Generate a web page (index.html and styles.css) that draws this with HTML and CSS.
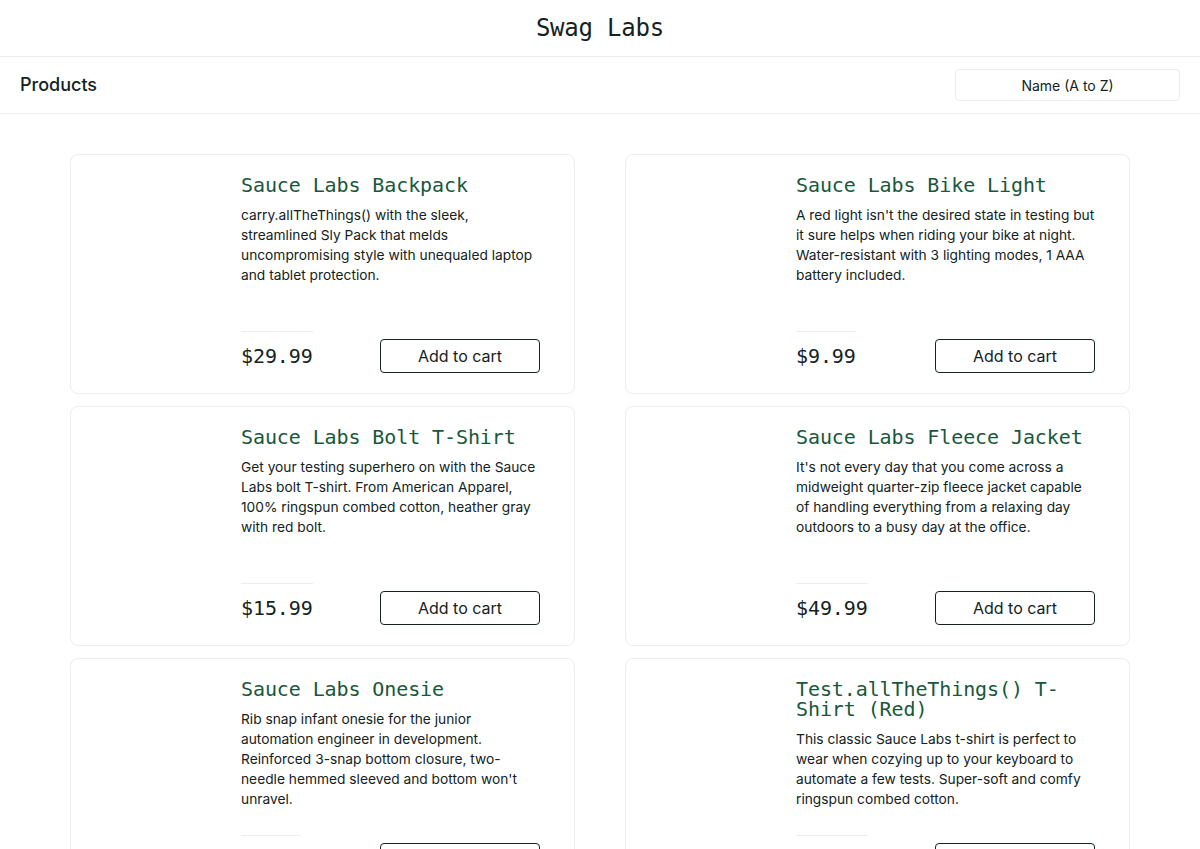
FILE: index.html
```html
<!DOCTYPE html>
<html lang="en">
<head>
<meta charset="utf-8">
<title>Swag Labs</title>
<link rel="stylesheet" href="styles.css">
</head>
<body>
<header class="app-header">
  <div class="app-logo">Swag Labs</div>
</header>
<div class="sub-header">
  <span class="title">Products</span>
  <div class="sort-select">Name (A to Z)</div>
</div>
<main class="inventory">
  <div class="item">
    <div class="item-img"></div>
    <div class="item-body">
      <div class="item-label">
        <div class="item-name">Sauce Labs Backpack</div>
        <div class="item-desc">carry.allTheThings() with the sleek, streamlined Sly Pack that melds uncompromising style with unequaled laptop and tablet protection.</div>
      </div>
      <div class="pricebar">
        <div class="price">$29.99</div>
        <button class="btn">Add to cart</button>
      </div>
    </div>
  </div>
  <div class="item">
    <div class="item-img"></div>
    <div class="item-body">
      <div class="item-label">
        <div class="item-name">Sauce Labs Bike Light</div>
        <div class="item-desc">A red light isn't the desired state in testing but it sure helps when riding your bike at night. Water-resistant with 3 lighting modes, 1 AAA battery included.</div>
      </div>
      <div class="pricebar">
        <div class="price">$9.99</div>
        <button class="btn">Add to cart</button>
      </div>
    </div>
  </div>
  <div class="item">
    <div class="item-img"></div>
    <div class="item-body">
      <div class="item-label">
        <div class="item-name">Sauce Labs Bolt T-Shirt</div>
        <div class="item-desc">Get your testing superhero on with the Sauce Labs bolt T-shirt. From American Apparel, 100% ringspun combed cotton, heather gray with red bolt.</div>
      </div>
      <div class="pricebar">
        <div class="price">$15.99</div>
        <button class="btn">Add to cart</button>
      </div>
    </div>
  </div>
  <div class="item">
    <div class="item-img"></div>
    <div class="item-body">
      <div class="item-label">
        <div class="item-name">Sauce Labs Fleece Jacket</div>
        <div class="item-desc">It's not every day that you come across a midweight quarter-zip fleece jacket capable of handling everything from a relaxing day outdoors to a busy day at the office.</div>
      </div>
      <div class="pricebar">
        <div class="price">$49.99</div>
        <button class="btn">Add to cart</button>
      </div>
    </div>
  </div>
  <div class="item">
    <div class="item-img"></div>
    <div class="item-body">
      <div class="item-label">
        <div class="item-name">Sauce Labs Onesie</div>
        <div class="item-desc">Rib snap infant onesie for the junior automation engineer in development. Reinforced 3-snap bottom closure, two-needle hemmed sleeved and bottom won't unravel.</div>
      </div>
      <div class="pricebar">
        <div class="price">$7.99</div>
        <button class="btn">Add to cart</button>
      </div>
    </div>
  </div>
  <div class="item">
    <div class="item-img"></div>
    <div class="item-body">
      <div class="item-label">
        <div class="item-name">Test.allTheThings() T-Shirt (Red)</div>
        <div class="item-desc">This classic Sauce Labs t-shirt is perfect to wear when cozying up to your keyboard to automate a few tests. Super-soft and comfy ringspun combed cotton.</div>
      </div>
      <div class="pricebar">
        <div class="price">$15.99</div>
        <button class="btn">Add to cart</button>
      </div>
    </div>
  </div>
</main>
</body>
</html>
```
FILE: styles.css
```css
* { box-sizing: border-box; }
html, body { margin: 0; padding: 0; background: #fff; }
body {
  font-family: "Inter", "DejaVu Sans", sans-serif;
  color: #132322;
}
.app-header {
  height: 57px;
  border-bottom: 1px solid #ededed;
  display: flex;
  align-items: center;
  justify-content: center;
}
.app-logo {
  font-family: "DejaVu Sans Mono", "Liberation Mono", monospace;
  font-size: 24px;
  line-height: 30px;
  letter-spacing: -0.2px;
  padding-bottom: 1px;
}
.sub-header {
  height: 57px;
  border-bottom: 1px solid #ededed;
  display: flex;
  align-items: center;
  justify-content: space-between;
  padding: 0 20px;
}
.sub-header .title {
  font-size: 18px;
  line-height: 24px;
  font-weight: 500;
}
.sort-select {
  width: 225px;
  height: 32px;
  border: 1px solid #ededed;
  border-radius: 4px;
  display: flex;
  align-items: center;
  justify-content: center;
  font-size: 14px;
  font-weight: 400;
}
.inventory {
  width: 1060px;
  margin: 40px auto 0;
  display: grid;
  grid-template-columns: 505px 505px;
  column-gap: 50px;
  row-gap: 12px;
}
.item {
  border: 1px solid #ededed;
  border-radius: 8px;
  display: flex;
  padding: 20px 34px 20px 20px;
}
.item-img {
  width: 150px;
  flex: none;
}
.item-body {
  flex: 1;
  display: flex;
  flex-direction: column;
}
.item-label { min-height: 130px; }
.item-name {
  font-family: "DejaVu Sans Mono", "Liberation Mono", monospace;
  font-size: 20px;
  line-height: 20px;
  color: #18583a;
  letter-spacing: -0.1px;
  margin-bottom: 10px;
}
.item-desc {
  font-size: 13.75px;
  line-height: 20px;
}
.pricebar {
  margin-top: 26px;
  display: flex;
  justify-content: space-between;
  align-items: flex-end;
}
.price {
  font-family: "DejaVu Sans Mono", "Liberation Mono", monospace;
  font-size: 20px;
  line-height: 24px;
  font-weight: 500;
  border-top: 1px solid #ededed;
  padding: 12px 0 5px;
  letter-spacing: -0.1px;
}
.btn {
  width: 160px;
  height: 34px;
  border: 1px solid #132322;
  border-radius: 4px;
  background: #fff;
  color: #132322;
  font-family: "Inter", "DejaVu Sans", sans-serif;
  font-size: 16px;
  font-weight: 400;
  padding: 0;
}
```
